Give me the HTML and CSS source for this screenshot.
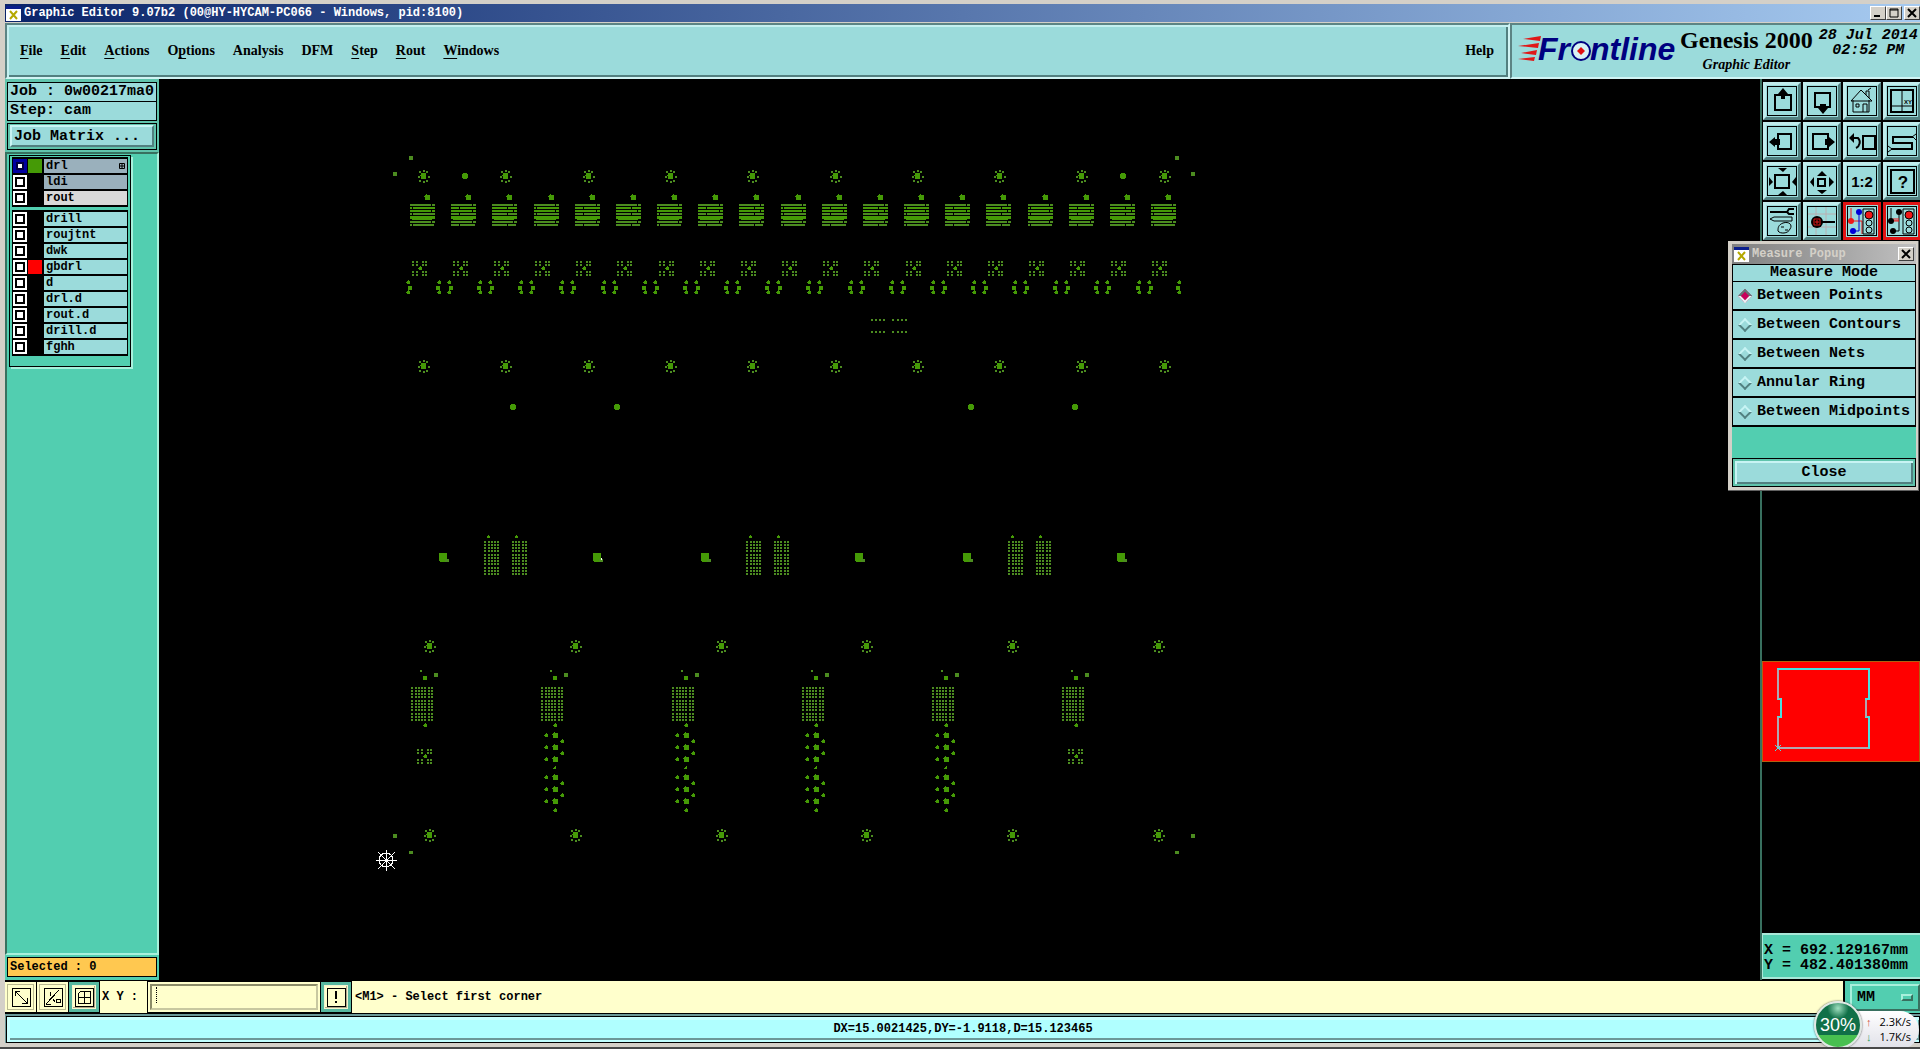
FILE: index.html
```html
<!DOCTYPE html>
<html lang="en">
<head>
  <meta charset="UTF-8">
  <meta name="viewport" content="width=device-width, initial-scale=1.0">
  <title>Graphic Editor 9.07b2</title>
  <link rel="stylesheet" href="styles.css">
</head>
<body>
  <div class="titlebar">
    <svg class="app-icon" viewBox="0 0 15 15"><path d="M0 0h15v15H0z" fill="#fff"/><path d="M0 0h15v3H0z" fill="#0a1e8c"/><path d="M4 5l7 8M11 5l-7 8" stroke="#b5a800" stroke-width="2"/></svg>
    <span class="title-text">Graphic Editor 9.07b2 (00@HY-HYCAM-PC066 - Windows, pid:8100)</span>
    <div class="window-buttons">
      <button class="win-btn" aria-label="Minimize"><svg viewBox="0 0 10 10"><path d="M1 8h6" stroke="#000" stroke-width="2"/></svg></button>
      <button class="win-btn" aria-label="Maximize"><svg viewBox="0 0 10 10"><path d="M1 1h8v8H1zM1 2h8" fill="none" stroke="#000"/></svg></button>
      <button class="win-btn win-close" aria-label="Close window"><svg viewBox="0 0 10 10"><path d="M1 1l8 8M9 1L1 9" stroke="#000" stroke-width="2"/></svg></button>
    </div>
  </div>

  <header class="header">
    <nav class="menubar">
      <a href="#"><u>F</u>ile</a>
      <a href="#"><u>E</u>dit</a>
      <a href="#"><u>A</u>ctions</a>
      <a href="#">O<u>p</u>tions</a>
      <a href="#">Analysis</a>
      <a href="#">DFM</a>
      <a href="#"><u>S</u>tep</a>
      <a href="#"><u>R</u>out</a>
      <a href="#"><u>W</u>indows</a>
      <a href="#" class="help">Help</a>
    </nav>
    <div class="brand">
      <svg class="logo" width="162" height="48" viewBox="0 -7 162 48">
        <path d="M5 5l18-3-1 5zM0 12l21-3-1 5zM3 19l16-3-1 5zM0 25l17-2-1 4z" fill="#e01818"/>
        <text x="20" y="26">Fr</text>
        <circle cx="63" cy="17" r="9" fill="#d8f2f4" stroke="#000080" stroke-width="2"/>
        <path d="M63 13l4 4-4 4-4-4z" fill="#e01010"/>
        <text x="72" y="26">ntline</text>
      </svg>
      <div class="product">
        <div class="product-name">Genesis 2000</div>
        <div class="product-sub">Graphic Editor</div>
      </div>
      <div class="clock">28 Jul 2014<br>02:52 PM</div>
    </div>
  </header>

  <main class="workspace">
    <aside class="left-panel">
      <div class="job-info">
        <div class="info-line">Job : 0w00217ma0</div>
        <div class="info-line">Step: cam</div>
        <div class="matrix-frame"><button class="matrix-btn">Job Matrix ...</button></div>
      </div>
      <div class="layer-area">
        <div class="layer-box">
          <div class="layers">
            <label class="layer current"><input type="checkbox"><i class="swatch green"></i><span class="name board">drl<svg width="6" height="6"><path d="M.5 .5h5v5h-5zM3 0v6M0 3h6" fill="none" stroke="#000"/></svg></span></label>
            <label class="layer"><input type="checkbox"><i class="swatch"></i><span class="name board">ldi</span></label>
            <label class="layer"><input type="checkbox"><i class="swatch"></i><span class="name gray">rout</span></label>
          </div>
          <div class="layers">
            <label class="layer"><input type="checkbox"><i class="swatch"></i><span class="name">drill</span></label>
            <label class="layer"><input type="checkbox"><i class="swatch"></i><span class="name">roujtnt</span></label>
            <label class="layer"><input type="checkbox"><i class="swatch"></i><span class="name">dwk</span></label>
            <label class="layer"><input type="checkbox"><i class="swatch red"></i><span class="name">gbdrl</span></label>
            <label class="layer"><input type="checkbox"><i class="swatch"></i><span class="name">d</span></label>
            <label class="layer"><input type="checkbox"><i class="swatch"></i><span class="name">drl.d</span></label>
            <label class="layer"><input type="checkbox"><i class="swatch"></i><span class="name">rout.d</span></label>
            <label class="layer"><input type="checkbox"><i class="swatch"></i><span class="name">drill.d</span></label>
            <label class="layer"><input type="checkbox"><i class="swatch"></i><span class="name">fghh</span></label>
          </div>
        </div>
      </div>
      <div class="selected">Selected : 0</div>
    </aside>

    <svg class="canvas" id="canvas"></svg>

    <aside class="right-panel">
      <div class="tools">
        <button class="tool" aria-label="Pan up"><svg viewBox="0 0 30 30"><path d="M8 9h16v15H8z" class="thick"/><path d="M16 2l5 6h-3v5h-4V8h-3z"/></svg></button>
        <button class="tool" aria-label="Pan down"><svg viewBox="0 0 30 30"><path d="M8 7h15v14H8z" class="thick"/><path d="M16 28l5-6h-2v-4h-6v4h-2z"/></svg></button>
        <button class="tool" aria-label="Home"><svg viewBox="0 0 30 30"><path d="M6 14v12h16V14M4 15L14 4l11 11H4M19 9V5h3v7M21 4l3-2M9 18h3v3H9zM16 26v-8h4v8" class="line"/></svg></button>
        <button class="tool" aria-label="XY zoom"><svg viewBox="0 0 30 30"><path d="M4 4h22v22H4z" class="thick"/><path d="M15 4v22M4 20h22" class="line"/><text x="17" y="18" class="tiny">XY</text></svg></button>

        <button class="tool" aria-label="Pan left"><svg viewBox="0 0 30 30"><path d="M11 8h13v15H11z" class="thick"/><path d="M2 16l6-5v2h5v6H8v2z"/></svg></button>
        <button class="tool" aria-label="Pan right"><svg viewBox="0 0 30 30"><path d="M6 8h15v15H6z" class="thick"/><path d="M28 16l-6-5v2h-4v6h4v2z"/></svg></button>
        <button class="tool" aria-label="Previous view"><svg viewBox="0 0 30 30"><path d="M16 10h12v13H16z" class="thick"/><path d="M6 12h5c3 3 2 8-2 10" class="thick"/><path d="M2 12l5-5v10z"/></svg></button>
        <button class="tool" aria-label="Serpentine"><svg viewBox="0 0 30 30"><path d="M26 11H6v6h19v6H4" class="thick"/><path d="M25 11l4-3M26 11l3 3M5 23l-4-3M5 23l-4 3" class="line"/></svg></button>

        <button class="tool" aria-label="Zoom out"><svg viewBox="0 0 30 30"><path d="M8 9h14v13H8z" class="thick"/><path d="M11 2h9l-4 4zM11 29h9l-4-4zM2 11l4 5-4 4zM29 11l-4 5 4 4z"/></svg></button>
        <button class="tool" aria-label="Zoom in"><svg viewBox="0 0 30 30"><path d="M11 13h7v7h-7z" class="thick"/><path d="M10 10l5-5 5 5zM10 24h10l-5 4zM7 11v10l-4-5zM22 11v10l5-5z"/></svg></button>
        <button class="tool" aria-label="Scale 1:2"><svg viewBox="0 0 30 30"><text x="15" y="21" class="ratio">1:2</text></svg></button>
        <button class="tool" aria-label="Query"><svg viewBox="0 0 30 30"><path d="M4 4h23v23H4z" class="thick"/><text x="16" y="22" class="query">?</text></svg></button>

        <button class="tool" aria-label="Settings"><svg viewBox="0 0 30 30"><path d="M3 6h17" class="thick"/><path d="M27 3h-5l-2 3 2 2h5" class="thick"/><path d="M3 13l4-2h18v4H7zM16 17c6-2 10 2 7 6-2 5-10 5-12 2 0-3 0-6 5-8zM14 21h3M18 24h3" class="line"/></svg></button>
        <button class="tool" aria-label="Probe"><svg viewBox="0 0 30 30"><path d="M9 1v28M19 1v28M1 8h28M1 21h28" stroke="#b9aeb0"/><path d="M15 16h13" class="thick"/><circle cx="10" cy="16" r="6"/><path d="M7 13h6v6H7zM9 15h2v2H9z" fill="none" stroke="#e01818"/></svg></button>
        <button class="tool hot" aria-label="Net check"><svg viewBox="0 0 30 30"><path d="M4 2v13h11v13" stroke="#f01818" fill="none"/><path d="M12 6v19H6" stroke="#0000d8" fill="none"/><circle cx="4" cy="15" r="3" fill="#f01818"/><circle cx="12" cy="6" r="3" fill="#0000d8"/><circle cx="6" cy="25" r="3" fill="#0000d8"/><path d="M16 3h11v25H16z" class="line"/><circle cx="22" cy="9" r="4" fill="#f01818" stroke="#000"/><circle cx="22" cy="17" r="3" class="line"/><circle cx="22" cy="24" r="3" class="line"/></svg></button>
        <button class="tool hot" aria-label="Short check"><svg viewBox="0 0 30 30"><path d="M4 2v13M12 6v19H6" class="line"/><path d="M5 15h7M7 15v-3M9 15v-3M11 15v-3" stroke="#f01818"/><circle cx="4" cy="15" r="3"/><circle cx="12" cy="6" r="3"/><circle cx="6" cy="25" r="3"/><path d="M16 3h11v25H16z" class="line"/><circle cx="22" cy="9" r="4" fill="#f01818" stroke="#000"/><circle cx="22" cy="17" r="3" class="line"/><circle cx="22" cy="24" r="3" class="line"/></svg></button>
      </div>
      <div class="overview">
        <svg width="156" height="98" viewBox="0 0 156 98">
          <path d="M15 7h91v30h-3v18h3v31H15V55h3V37h-3z" fill="none" stroke="#48e0e0" stroke-width="2"/>
          <path d="M15 8v29M15 55v30M103 38v17M16 86h89" fill="none" stroke="#b0a8b0" stroke-width="2"/>
          <path d="M12 83l6 6M18 83l-6 6" stroke="#48e0e0"/>
        </svg>
      </div>
      <div class="coords">X = 692.129167mm<br>Y = 482.401380mm</div>
    </aside>
  </main>

  <div class="command-bar">
    <button class="cmd" aria-label="Absolute"><svg viewBox="0 0 20 20"><path d="M1 1h18v18H1zM4 4l12 12M4 9V4h5M16 11v5h-5"/></svg></button>
    <button class="cmd" aria-label="Angle"><svg viewBox="0 0 20 20"><path d="M1 1h18v18H1zM3 17L16 3M3 17h5M7 5v4M10 12l2 3M13 12h4v3h-4z"/></svg></button>
    <button class="cmd framed" aria-label="Grid"><svg viewBox="0 0 20 20"><path d="M1 1h18v18H1zM4 7l3-3h9v12H4zM10 4v12M4 10h12"/></svg></button>
    <label class="xy-label" for="xy">X Y :</label>
    <div class="xy-box"><i class="caret"></i><input id="xy" type="text"></div>
    <button class="cmd framed" aria-label="Apply"><svg viewBox="0 0 20 20"><path d="M1 1h18v18H1z"/><path d="M10 4v8M10 14v2" stroke-width="2"/></svg></button>
    <div class="message">&lt;M1&gt; - Select first corner</div>
    <div class="unit-frame"><button class="unit">MM<i></i></button></div>
  </div>

  <div class="status"><div class="status-inner">DX=15.0021425,DY=-1.9118,D=15.123465</div></div>

  <section class="popup">
    <div class="popup-title">
      <svg class="app-icon" viewBox="0 0 15 15"><path d="M0 0h15v15H0z" fill="#fff"/><path d="M0 0h15v3H0z" fill="#0a1e8c"/><path d="M4 5l7 8M11 5l-7 8" stroke="#b5a800" stroke-width="2"/></svg>
      <span>Measure Popup</span>
      <button class="win-btn" aria-label="Close popup"><svg viewBox="0 0 10 10"><path d="M1 1l8 8M9 1L1 9" stroke="#000" stroke-width="2"/></svg></button>
    </div>
    <div class="popup-head">Measure Mode</div>
    <div class="modes">
      <label><input type="radio" name="mode" checked>Between Points</label>
      <label><input type="radio" name="mode">Between Contours</label>
      <label><input type="radio" name="mode">Between Nets</label>
      <label><input type="radio" name="mode">Annular Ring</label>
      <label><input type="radio" name="mode">Between Midpoints</label>
    </div>
    <div class="close-frame"><button class="close-btn">Close</button></div>
  </section>

  <div class="meter">
    <div class="rates">
      <div><b class="up">↑</b><span>2.3K/s</span></div>
      <div><b class="down">↓</b><span>1.7K/s</span></div>
    </div>
    <div class="ball">30%</div>
  </div>

  <script>
    // drill layer, in screen coordinates; the group is shifted to the canvas origin
    const out = [];
    const DIM = '#4c8c20';
    const FULL = '#459a06';

    function rect(x, y, w, h, fill) {
      out.push(`<rect x="${Math.round(x)}" y="${y}" width="${w}" height="${h}" fill="${fill || FULL}"/>`);
    }
    function dots(xs, ys) {
      xs.forEach(x => ys.forEach(y => rect(x, y, 2, 2, DIM)));
    }
    function sun(x, y) {
      rect(x - 2, y - 3, 5, 6);
      rect(x - 3, y - 1, 1, 1);
      [[0, -6], [3, -5], [5, 0], [3, 4], [0, 5], [-4, 4], [-5, 0], [-4, -5]].forEach(p => {
        rect(x + p[0], y + p[1], 2, 2, DIM);
      });
    }
    function knob(x, y, s) {
      rect(x, y, s, s);
      rect(x - 1, y + 1, 1, 1);
      rect(x + 1, y - 1, 1, 1);
    }
    function circle(x, y) {
      rect(x - 3, y - 2, 6, 4);
      rect(x - 2, y - 3, 4, 6);
    }
    function cluster(x, y) {
      x = Math.round(x);
      dots([x, x + 4, x + 10, x + 13], [y, y + 3, y + 10, y + 13]);
      knob(x + 7, y + 6, 3);
    }
    function half(x, side) {
      x = Math.round(x);
      const edge = side < 0 ? x + 2 : x - 1;
      rect(x, 286, 4, 4);
      knob(edge, 281, 3);
      knob(edge, 291, 3);
    }
    function hole(x, y) {
      rect(x, y + 1, 8, 7);
      rect(x, y, 8, 1);
      rect(x + 1, y + 8, 6, 1);
      rect(x + 6, y + 6, 4, 3, DIM);
    }

    [[409, 156], [393, 172], [1175, 156], [1191, 172], [393, 834], [1191, 834]].forEach(p => rect(p[0], p[1], 4, 4, DIM));
    rect(409, 851, 4, 3, DIM);
    rect(1175, 851, 4, 3, DIM);

    for (let i = 0; i < 10; i++) {
      const x = Math.round(423 + i * 82.3);
      sun(x, 176);
      sun(x, 366);
    }
    [[465, 176], [1123, 176], [513, 407], [617, 407], [971, 407], [1075, 407]].forEach(p => circle(p[0], p[1]));

    for (let i = 0; i < 19; i++) {
      const x = Math.round(410 + i * 41.17);
      knob(x + 15, 195, 5);
      [204, 207, 210, 213, 216, 221, 224].forEach((y, r) => {
        rect(x, y, r === 6 ? 24 : 25, r === 4 ? 3 : 2, r % 3 === 0 || r === 5 ? DIM : FULL);
      });
      rect(x + 2, 218, 20, 2);
      // breaks between neighbouring pads
      const cut = [2, 8, 15][i % 3];
      [207, 213, 224].forEach(y => rect(x + cut, y, 1, 2, '#000'));
      [204, 210, 221].forEach(y => rect(x + 21, y, 1, 2, '#000'));
      cluster(411.7 + i * 41.15, 261);
    }
    for (let i = 0; i < 18; i++) {
      half(436 + i * 41.15, -1);
      half(449 + i * 41.15, 1);
    }
    half(408, 1);
    half(1176, -1);
    dots([871, 875, 879, 883, 892, 897, 901, 905], [319, 331]);

    [439, 593, 701, 855, 963, 1117].forEach(x => hole(x, 553));
    rect(601, 558, 1, 2, '#fff');
    const gridRows = [0, 3, 6, 9, 13, 16, 19, 22, 26, 29, 32];
    [484, 746, 1008].forEach(x => {
      dots([0, 4, 7, 10, 13].map(d => x + d), gridRows.map(d => 541 + d));
      dots([0, 3, 6, 10, 13].map(d => x + 28 + d), gridRows.map(d => 541 + d));
      rect(x + 3, 536, 3, 2);
      rect(x + 4, 535, 1, 1);
      rect(x + 31, 536, 3, 2);
      rect(x + 32, 535, 1, 1);
    });

    [429, 575, 721, 866, 1012, 1158].forEach(x => {
      sun(x, 646);
      sun(x, 835);
    });
    [411, 541, 672, 802, 932, 1062].forEach((x, i) => {
      dots([0, 4, 7, 10, 13, 17, 20].map(d => x + d), gridRows.map(d => 687 + d));
      rect(x + 9, 670, 2, 2, DIM);
      rect(x + 12, 676, 4, 4);
      rect(x + 23, 673, 4, 4, DIM);
      knob(x + 13, 724, 3);
      if (i === 0 || i === 5) {
        cluster(x + 6, 749);
        return;
      }
      [733, 745, 757, 775, 787, 799].forEach(y => {
        knob(x + 12, y, 5);
        knob(x + 4, y + 1, 3);
      });
      [740, 752, 782, 794].forEach(y => knob(x + 20, y, 3));
      knob(x + 13, 767, 2);
      knob(x + 13, 809, 3);
    });

    // origin marker
    out.push('<path d="M386 850v21M376 860h21M378 852l17 17M395 852l-17 17" stroke="#fff"/><circle cx="386" cy="860" r="7" fill="none" stroke="#fff"/>');

    document.getElementById('canvas').innerHTML = `<g transform="translate(-159 -79)">${out.join('')}</g>`;
  </script>
</body>
</html>
```

FILE: styles.css
```css
* {
  box-sizing: border-box;
}
body {
  margin: 0;
  height: 100vh;
  display: flex;
  flex-direction: column;
  padding: 4px 0 4px 5px;
  overflow: hidden;
  position: relative;
  background: #d4d0c8;
  border-bottom: 2px solid #484848;
  color: #000;
  font: bold 15px "Liberation Mono", monospace;
}
button, input {
  font: inherit;
  color: inherit;
  margin: 0;
  padding: 0;
  border-radius: 0;
}
a {
  color: inherit;
  text-decoration: none;
}

/* title bar */
.titlebar {
  flex: none;
  height: 18px;
  display: flex;
  align-items: center;
  gap: 3px;
  padding-left: 1px;
  background: linear-gradient(to right, #0a246a, #a6caf0);
  color: #fff;
  font-size: 12px;
}
.app-icon {
  width: 15px;
  height: 15px;
  flex: none;
}
.window-buttons {
  display: flex;
  margin-left: auto;
}
.win-btn {
  width: 16px;
  height: 14px;
  display: flex;
  align-items: center;
  justify-content: center;
  background: #d4d0c8;
  border: 1px solid;
  border-color: #fff #404040 #404040 #fff;
}
.win-btn svg {
  width: 10px;
  height: 10px;
}
.win-close {
  margin-left: 2px;
}

/* menu bar and brand */
.header {
  flex: none;
  display: flex;
  height: 57px;
  padding-top: 1px;
}
.menubar, .brand {
  background: #9bdbdb;
  border: 2px solid;
  border-color: #5c8484 #d0f4f4 #d0f4f4 #5c8484;
}
.menubar {
  flex: 1;
  display: flex;
  align-items: center;
  gap: 18px;
  padding: 0 14px 0 13px;
  box-shadow: inset 2px 2px #c4f0f0, inset -2px -2px #528080;
  font: bold 14px "Liberation Serif", serif;
}
.menubar u {
  text-underline-offset: 3px;
}
.help {
  margin-left: auto;
}
.brand {
  width: 410px;
  display: flex;
  align-items: flex-start;
  padding: 2px 0 0 6px;
  border-right: 0;
}
.logo {
  flex: none;
}
.logo text {
  font: italic bold 32px "Liberation Sans", sans-serif;
  fill: #000080;
}
.product {
  font-family: "Liberation Serif", serif;
  text-align: center;
  white-space: nowrap;
}
.product-name {
  font-size: 24px;
  line-height: 26px;
}
.product-sub {
  font-size: 14px;
  line-height: 24px;
  font-style: italic;
}
.clock {
  margin-left: 6px;
  padding-top: 1px;
  font-style: italic;
  line-height: 15px;
  text-align: center;
  white-space: nowrap;
}

/* work area */
.workspace {
  flex: 1;
  min-height: 0;
  display: flex;
  background: #000;
}
.left-panel {
  width: 154px;
  flex: none;
  display: flex;
  flex-direction: column;
  background: #52ceb0;
}
.job-info {
  padding: 3px 2px 2px;
  background: #60c4ac;
}
.info-line {
  height: 20px;
  margin-bottom: -1px;
  padding-left: 2px;
  border: 1px solid #000;
  background: #9bdbdb;
  line-height: 18px;
  white-space: nowrap;
}
.matrix-frame {
  margin-top: 3px;
  padding: 1px 2px 2px;
  border: 1px solid #000;
}
.matrix-btn, .close-btn {
  display: block;
  width: 100%;
  height: 22px;
  background: #9bdbdb;
  border: 2px solid;
  border-color: #c8f4f4 #528080 #528080 #c8f4f4;
}
.matrix-btn {
  padding-left: 2px;
  text-align: left;
}
.layer-area {
  flex: 1;
  padding: 1px 0 0 2px;
  border: 2px solid;
  border-color: #38705f #a8f0dc #a8f0dc #38705f;
}
.layer-box {
  width: 122px;
  padding: 1px 2px 10px;
  border: 1px solid #000;
  box-shadow: 2px 2px #a8f0dc;
}
.layers {
  padding: 1px;
  background: #000;
}
.layers + .layers {
  margin-top: 3px;
}
.layer {
  height: 16px;
  display: flex;
  gap: 1px;
  padding: 1px 0;
  font-size: 12px;
}
.layer input {
  appearance: none;
  width: 14px;
  height: 14px;
  background: #fff;
  border: 2px solid #fff;
  outline: 2px solid #000;
  outline-offset: -4px;
}
.layer.current input {
  border: 3px solid #0000a0;
  outline-color: #000040;
  outline-offset: -5px;
}
.swatch {
  width: 14px;
}
.green {
  background: #459a06;
}
.red {
  background: #f00;
}
.name {
  flex: 1;
  display: flex;
  align-items: center;
  justify-content: space-between;
  margin-left: 1px;
  padding: 0 2px;
  background: #9bdbdb;
  line-height: 14px;
}
.board {
  background: #9ab0bc;
}
.gray {
  background: #d9d9d9;
}
.selected {
  height: 20px;
  margin: 2px 2px 3px;
  padding-left: 2px;
  border: 1px solid #000;
  background: #ffc850;
  font-size: 12px;
  line-height: 18px;
}
.canvas {
  flex: 1;
  min-width: 0;
  height: 100%;
  shape-rendering: crispEdges;
}

/* right column */
.right-panel {
  width: 160px;
  flex: none;
  display: flex;
  flex-direction: column;
  border-left: 2px solid #38705f;
  overflow: hidden;
}
.tools {
  display: grid;
  grid-template-columns: repeat(4, 38px);
  gap: 2px;
  padding: 3px 0 0 1px;
}
.tool {
  height: 38px;
  padding: 1px;
  background: #9bdbdb;
  border: 3px solid;
  border-color: #c0ecec #528080 #528080 #c0ecec;
}
.tool svg {
  display: block;
  width: 30px;
  height: 30px;
  outline: 1px solid #000;
  outline-offset: -1px;
}
.tool.hot {
  border-color: #e01414;
}
.thick {
  fill: none;
  stroke: #000;
  stroke-width: 2;
}
.line {
  fill: none;
  stroke: #000;
}
.tiny {
  font: bold 6px "Liberation Sans", sans-serif;
}
.ratio {
  font: bold 15px "Liberation Sans", sans-serif;
  text-anchor: middle;
}
.query {
  font: bold 17px "Liberation Sans", sans-serif;
  text-anchor: middle;
}
.overview {
  margin-top: auto;
  height: 101px;
  border: 1px solid #b06010;
  background: #f00;
}
.coords {
  height: 46px;
  margin: 171px 0 1px;
  padding: 8px 0 0 1px;
  border: solid #a8e8d8;
  border-width: 2px 0 2px 1px;
  background: #52ceb0;
  line-height: 15px;
  white-space: nowrap;
}

/* command line */
.command-bar {
  flex: none;
  display: flex;
  height: 34px;
  border: solid #000;
  border-width: 1px 0;
  background: #ffffcc;
  font-size: 12px;
}
.cmd {
  width: 32px;
  padding: 3px;
  background: #ffffcc;
  border: 1px solid #000;
  border-left: 0;
  box-shadow: inset 0 0 0 2px #ffffcc, inset 0 0 0 3px #b8b890;
  display: flex;
  align-items: center;
  justify-content: center;
}
.cmd svg {
  width: 20px;
  height: 20px;
  fill: none;
  stroke: #000;
  shape-rendering: crispEdges;
}
.cmd.framed {
  width: 31px;
  box-shadow: inset 0 0 0 3px #58b8a0, inset 0 0 0 4px #f4f4d0, inset -5px -5px #b0a888;
}
.xy-label {
  width: 47px;
  padding-left: 2px;
  line-height: 32px;
  white-space: nowrap;
}
.xy-box {
  width: 174px;
  padding: 2px;
  border: 1px solid #000;
  display: flex;
}
.xy-box input {
  flex: 1;
  min-width: 0;
  background: #ffffcc;
  border: 2px solid;
  border-color: #8c8c68 #c8c8a0 #c8c8a0 #8c8c68;
  outline: 0;
}
/* text cursor lies over the box */
.caret {
  position: absolute;
  height: 16px;
  margin: 3px 0 0 6px;
  border-left: 1px dotted #000;
}
.message {
  flex: 1;
  padding-left: 3px;
  border-right: 2px solid #000;
  line-height: 32px;
}
.unit-frame {
  width: 75px;
  padding: 3px 0 2px 5px;
  background: #52ceb0;
}
.unit {
  width: 100%;
  height: 27px;
  display: flex;
  align-items: center;
  justify-content: space-between;
  padding: 0 5px;
  background: #52ceb0;
  border: 2px solid;
  border-color: #a8f0dc #38705f #38705f #a8f0dc;
  font-size: 15px;
}
.unit i {
  width: 12px;
  height: 7px;
  border: 2px solid;
  border-color: #a8f0dc #38705f #38705f #a8f0dc;
}

.status {
  flex: none;
  padding: 2px 0 0 1px;
  background: #6c9898;
}
.status-inner {
  height: 27px;
  border: 1px solid #000;
  background: #b0ffff;
  box-shadow: inset 3px 3px #c8ffff, inset 0 -2px #c0ffff, inset -1px -4px #6c9898;
  font-size: 12px;
  line-height: 25px;
  text-align: center;
}

/* measure popup */
.popup {
  position: absolute;
  top: 241px;
  right: 1px;
  width: 191px;
  padding: 3px 2px 3px 4px;
  background: #d4d0c8;
  border-right: 1px solid #606060;
  border-bottom: 1px solid #606060;
}
.popup-title {
  display: flex;
  align-items: center;
  gap: 3px;
  height: 20px;
  padding: 0 2px;
  background: linear-gradient(to right, #808080, #c0c0c0);
  color: #d4d0c8;
  font-size: 12px;
}
.popup-title .win-btn {
  margin-left: auto;
}
.popup-head {
  height: 18px;
  border: 1px solid #000;
  background: #9bdbdb;
  line-height: 16px;
  text-align: center;
}
.modes {
  padding: 0 1px;
  background: #000;
}
.modes label {
  display: flex;
  align-items: center;
  gap: 7px;
  height: 29px;
  padding-left: 7px;
  background: #9bdbdb;
  border-bottom: 2px solid #000;
  white-space: nowrap;
}
.modes input {
  appearance: none;
  flex: none;
  width: 10px;
  height: 10px;
  border: 2px solid;
  border-color: #c8f4f4 #528080 #528080 #c8f4f4;
  transform: rotate(45deg);
}
.modes input:checked {
  border-color: #607878 #e8f4f4 #e8f4f4 #607878;
  background: #c8005c;
}
.close-frame {
  padding-top: 31px;
  background: #52ceb0;
}
.close-btn {
  height: 29px;
  border: 1px solid #000;
  box-shadow: inset 0 0 0 2px #60c4ac, inset 4px 4px #c8f4f4, inset -4px -4px #528080;
}

/* network speed meter */
.meter {
  position: absolute;
  right: 1px;
  bottom: -2px;
  padding-left: 36px;
}
.ball {
  position: absolute;
  left: 0;
  bottom: 0;
  width: 48px;
  height: 48px;
  border: 2px solid #e0e8e4;
  border-radius: 50%;
  background: radial-gradient(circle at 50% 12%, #a0e0c0, transparent 24%), linear-gradient(#107048 0 72%, #48c050 72%);
  box-shadow: 0 0 2px #404040;
  color: #fff;
  font: 18px/44px "Liberation Sans", sans-serif;
  text-align: center;
}
.rates {
  width: 69px;
  height: 38px;
  padding: 3px 8px 0 16px;
  border-radius: 0 20px 20px 0;
  background: linear-gradient(#fff, #e0e0e8);
  font: 11px/15px "Open Sans", sans-serif;
}
.rates div {
  display: flex;
  justify-content: space-between;
}
.up {
  color: #d05040;
}
.down {
  color: #30a060;
}
```
